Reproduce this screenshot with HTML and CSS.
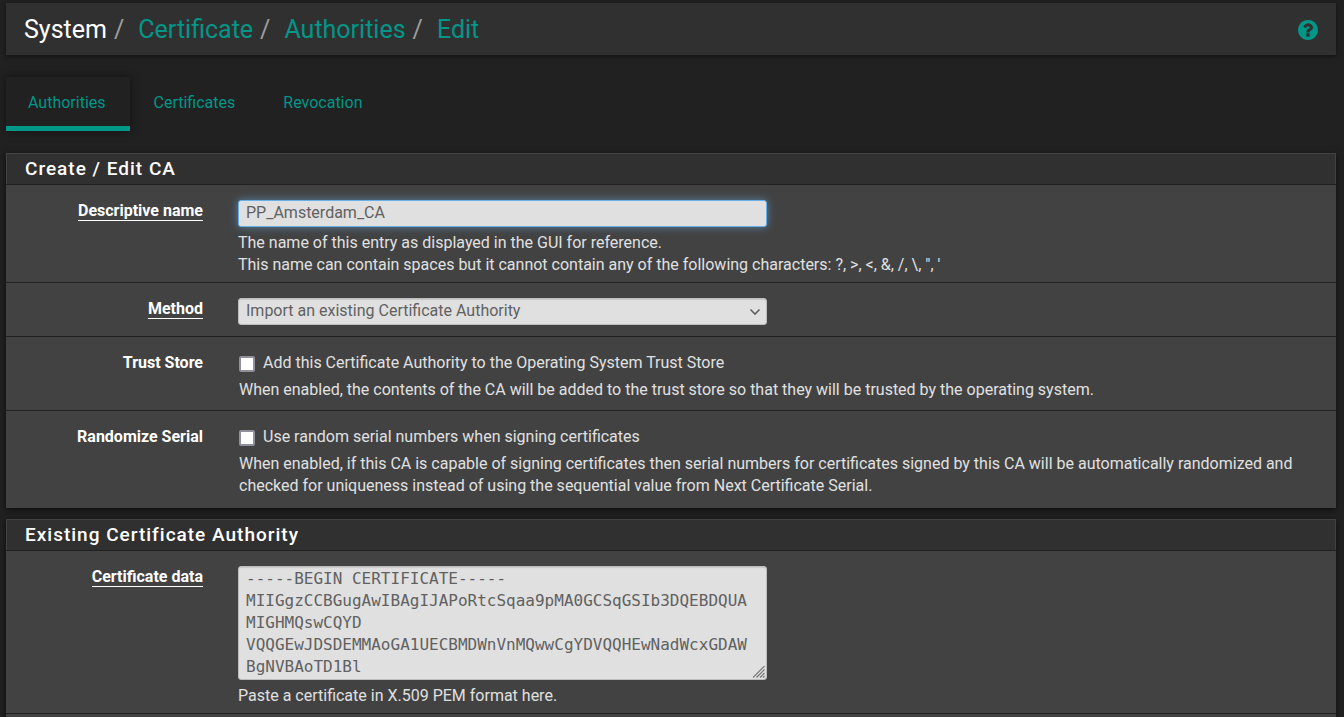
FILE: index.html
```html
<!DOCTYPE html>
<html lang="en">
<head>
<meta charset="utf-8">
<title>System: Certificate: Authorities: Edit</title>
<link rel="stylesheet" href="styles.css">
</head>
<body>
<header class="page-header">
  <ol class="breadcrumb">
    <li>System</li>
    <li><a href="#">Certificate</a></li>
    <li><a href="#">Authorities</a></li>
    <li><a href="#">Edit</a></li>
  </ol>
  <a class="help-link" href="#" aria-label="Help">
    <svg viewBox="0 0 1536 1536" width="20" height="20" aria-hidden="true"><path fill="currentColor" d="M896 1248v-192q0-14-9-23t-23-9H672q-14 0-23 9t-9 23v192q0 14 9 23t23 9h192q14 0 23-9t9-23zm256-672q0-88-55.500-163T958 297t-170-41q-243 0-371 213-15 24 8 42l132 100q7 6 19 6 16 0 25-12 53-68 86-92 34-24 86-24 48 0 85.500 26t37.500 59q0 38-20 61t-68 45q-63 28-115.500 86.500T640 892v36q0 14 9 23t23 9h192q14 0 23-9t9-23q0-19 21.500-49.500T972 829q32-18 49-28.500t46-35 44.500-48 28-60.500 12.500-81zm384 192q0 209-103 385.500T1153.500 1433 768 1536t-385.500-103T103 1153.500 0 768t103-385.500T382.500 103 768 0t385.500 103T1433 382.500 1536 768z"/></svg>
  </a>
</header>

<nav class="tabs">
  <a class="tab tab-active" href="#">Authorities</a>
  <a class="tab" href="#">Certificates</a>
  <a class="tab" href="#">Revocation</a>
</nav>

<form>
  <section class="panel">
    <h2 class="panel-title">Create / Edit CA</h2>
    <div class="form-row">
      <div class="label-cell"><label class="required" for="descr">Descriptive name</label></div>
      <div class="field-cell">
        <input class="control control-focus" id="descr" type="text" value="PP_Amsterdam_CA">
        <p class="help">The name of this entry as displayed in the GUI for reference.<br>This name can contain spaces but it cannot contain any of the following characters: ?, &gt;, &lt;, &amp;, /, \, ", '</p>
      </div>
    </div>
    <div class="form-row">
      <div class="label-cell"><label class="required" for="method">Method</label></div>
      <div class="field-cell">
        <div class="control-wrap select-wrap">
          <select class="control" id="method"><option>Import an existing Certificate Authority</option></select>
          <svg class="chevron" viewBox="0 0 12 8" width="12" height="8" aria-hidden="true"><path d="M1.500 1.500L6 6l4.500-4.500" fill="none" stroke="currentColor" stroke-width="1.600"/></svg>
        </div>
      </div>
    </div>
    <div class="form-row check-row">
      <div class="label-cell"><span>Trust Store</span></div>
      <div class="field-cell">
        <label class="check"><input type="checkbox"><span>Add this Certificate Authority to the Operating System Trust Store</span></label>
        <p class="help">When enabled, the contents of the CA will be added to the trust store so that they will be trusted by the operating system.</p>
      </div>
    </div>
    <div class="form-row check-row">
      <div class="label-cell"><span>Randomize Serial</span></div>
      <div class="field-cell">
        <label class="check"><input type="checkbox"><span>Use random serial numbers when signing certificates</span></label>
        <p class="help">When enabled, if this CA is capable of signing certificates then serial numbers for certificates signed by this CA will be automatically randomized and checked for uniqueness instead of using the sequential value from Next Certificate Serial.</p>
      </div>
    </div>
  </section>

  <section class="panel">
    <h2 class="panel-title">Existing Certificate Authority</h2>
    <div class="form-row">
      <div class="label-cell"><label class="required" for="cert">Certificate data</label></div>
      <div class="field-cell">
        <div class="control-wrap">
          <textarea class="control control-area" id="cert" rows="5" spellcheck="false">-----BEGIN CERTIFICATE-----
MIIGgzCCBGugAwIBAgIJAPoRtcSqaa9pMA0GCSqGSIb3DQEBDQUA
MIGHMQswCQYD
VQQGEwJDSDEMMAoGA1UECBMDWnVnMQwwCgYDVQQHEwNadWcxGDAW
BgNVBAoTD1Bl</textarea>
          <svg class="grip" viewBox="0 0 12 12" width="12" height="12" aria-hidden="true"><path d="M0 11.500L11.500 0M3.500 11.500l8-8M7 11.500l4.500-4.500M10 11.500l1.500-1.500" fill="none" stroke="currentColor" stroke-width="1.200"/></svg>
        </div>
        <p class="help">Paste a certificate in X.509 PEM format here.</p>
      </div>
    </div>
    <div class="form-row"></div>
  </section>
</form>
</body>
</html>
```
FILE: styles.css
```css
* {
  box-sizing: border-box;
}

html {
  height: 100%;
  overflow: hidden;
}

body {
  height: 100%;
  overflow: hidden;
  margin: 0;
  padding: 3px 8px 0 6px;
  background: #212121;
  color: #e0e0e0;
  font-family: Roboto, "Liberation Sans", sans-serif;
  font-size: 16px;
  line-height: 22px;
}

a {
  color: #009688;
  text-decoration: none;
}

.page-header {
  display: flex;
  align-items: center;
  justify-content: space-between;
  height: 52px;
  padding: 2px 18px 0;
  background: #303030;
  box-shadow: 0 1px 5px rgba(0, 0, 0, 0.5);
}

.breadcrumb {
  display: flex;
  margin: 0;
  padding: 0;
  list-style: none;
  color: #fff;
  font-size: 25px;
  line-height: 30px;
}

.breadcrumb li + li::before {
  content: "/";
  padding: 0 14px 0 7px;
  color: #9e9e9e;
}

.help-link {
  display: flex;
}

.tabs {
  display: flex;
  margin: 22px 0;
}

.tab {
  padding: 15px 24px 12px;
  border-bottom: 5px solid transparent;
}

.tab-active {
  padding-left: 22px;
  border-bottom-color: #009688;
  box-shadow: 0 0 8px rgba(0, 0, 0, 0.5);
}

.panel {
  margin-bottom: 11px;
  padding-bottom: 2px;
  background: #424242;
  box-shadow: 0 2px 6px rgba(0, 0, 0, 0.6);
}

.panel-title {
  margin: 0;
  padding: 4px 18px;
  border: 1px solid #424242;
  border-bottom: 0;
  background: #303030;
  color: #fff;
  font-size: 19px;
  font-weight: 500;
  line-height: 22px;
  letter-spacing: 1px;
}

.form-row {
  display: grid;
  grid-template-columns: 219px 1fr;
  padding: 15px 0 6px;
  border-top: 1px solid #212121;
}

.check-row {
  padding-bottom: 9px;
}

.label-cell {
  padding-right: 22px;
  color: #fff;
  font-weight: 700;
  text-align: right;
}

.required {
  display: inline-block;
  border-bottom: 1px solid #fff;
  line-height: 19px;
}

.field-cell {
  padding: 0 13px;
}

.check-row .field-cell {
  padding-left: 14px;
}

.control {
  display: block;
  width: calc(50% - 14px);
  height: 27px;
  margin: 0;
  padding: 0 7px 2px;
  border: 1px solid #bdbdbd;
  border-radius: 3px;
  outline: 0;
  background: #e0e0e0;
  box-shadow: inset 0 1px 1px rgba(0, 0, 0, 0.1);
  color: #616161;
  font: inherit;
}

.control-focus {
  border-color: #66afe9;
  box-shadow: 0 0 8px rgba(102, 175, 233, 0.6);
}

.control-wrap {
  position: relative;
  width: calc(50% - 14px);
}

.control-wrap .control {
  width: 100%;
}

.select-wrap {
  margin-bottom: 5px;
}

.select-wrap .control {
  appearance: none;
}

.chevron {
  position: absolute;
  top: 10px;
  right: 6px;
  color: #616161;
  pointer-events: none;
}

.control-wrap .control-area {
  height: auto;
  padding: 1px 7px;
  overflow: hidden;
  font-family: "DejaVu Sans Mono", monospace;
  resize: none;
}

.grip {
  position: absolute;
  right: 2px;
  bottom: 2px;
  color: #757575;
  pointer-events: none;
}

.help {
  margin: 5px 0 0;
}

.check {
  display: flex;
  align-items: center;
  gap: 8px;
}

.check input {
  appearance: none;
  width: 16px;
  height: 16px;
  margin: 2px 0 0;
  border: 2px solid #8f8f9d;
  border-radius: 2px;
  background: #fff;
}
```
